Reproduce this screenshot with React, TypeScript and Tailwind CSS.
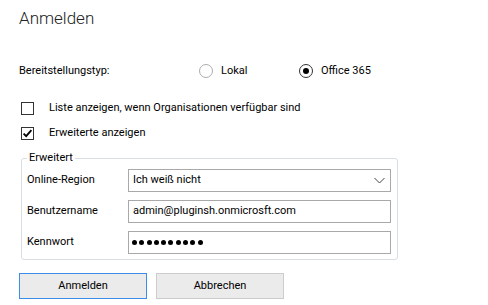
import React from "react";

const font = { fontFamily: 'Roboto, "Liberation Sans", sans-serif' };

function Radio({ checked, label }: { checked?: boolean; label: string }) {
  return (
    <div className="flex items-center">
      <div
        className={
          "w-[14px] h-[14px] rounded-full border flex items-center justify-center bg-white " +
          (checked ? "border-[#333333]" : "border-[#adadad]")
        }
      >
        {checked && <div className="w-[6px] h-[6px] rounded-full bg-black" />}
      </div>
      <span className="ml-[8px]">{label}</span>
    </div>
  );
}

function Check({ checked, label }: { checked?: boolean; label: string }) {
  return (
    <div className="flex items-center h-[20px]">
      <div className="w-[13px] h-[13px] border border-[#333333] bg-white flex items-center justify-center">
        {checked && (
          <svg width="11" height="11" viewBox="0 0 11 11">
            <path d="M1.6 5.6 L4.2 8.2 L9.4 2.2" fill="none" stroke="#000" strokeWidth="1.8" />
          </svg>
        )}
      </div>
      <span className="ml-[15px]">{label}</span>
    </div>
  );
}

function Field({ label, children }: { label: string; children: React.ReactNode }) {
  return (
    <div className="flex items-center h-[23px]">
      <div className="w-[104px] pl-[3px]">{label}</div>
      <div className="w-[263px] h-[23px] border border-[#a9a9a9] bg-white flex items-center px-[4px]">
        {children}
      </div>
    </div>
  );
}

export default function App() {
  const dots = [0, 1, 2, 3, 4, 5, 6, 7, 8, 9];
  return (
    <div
      className="w-[488px] h-[305px] bg-white overflow-hidden pl-[19px] text-[11px] text-black"
      style={font}
    >
      <div className="pt-[6px] h-[52px] text-[17px] font-light leading-[24px] text-[#222]">Anmelden</div>
      <div className="flex items-center h-[20px] mt-[9px]">
        <div className="w-[180px]">Bereitstellungstyp:</div>
        <div className="w-[100px]">
          <Radio label="Lokal" />
        </div>
        <Radio checked label="Office 365" />
      </div>
      <div className="mt-[17px] pl-[2px]">
        <Check label="Liste anzeigen, wenn Organisationen verfügbar sind" />
        <div className="mt-[5px]">
          <Check checked label="Erweiterte anzeigen" />
        </div>
      </div>
      <div className="relative ml-[2px] mt-[15px] w-[377px] h-[102px] border border-[#d9dee5] rounded-[3px] pt-[10px] px-[2px]">
        <div className="absolute left-[5px] top-[-9px] bg-white px-[2px] leading-[16px]">Erweitert</div>
        <div className="flex flex-col gap-[8px]">
          <Field label="Online-Region">
            <span className="flex-1">Ich weiß nicht</span>
            <svg width="11" height="7" viewBox="0 0 11 7" className="mr-[1px]">
              <path d="M0.5 1 L5.5 6 L10.5 1" fill="none" stroke="#444" strokeWidth="1" />
            </svg>
          </Field>
          <Field label="Benutzername">
            <span>admin@pluginsh.onmicrosft.com</span>
          </Field>
          <Field label="Kennwort">
            <div className="flex gap-[2.3px] ml-[-1px]">
              {dots.map((d) => (
                <div key={d} className="w-[5px] h-[5px] rounded-full bg-black" />
              ))}
            </div>
          </Field>
        </div>
      </div>
      <div className="flex gap-[9px] mt-[13px]">
        <div className="w-[128px] h-[26px] border border-[#3c8fe8] bg-[#ebebeb] flex items-center justify-center">
          Anmelden
        </div>
        <div className="w-[128px] h-[26px] border border-[#cccccc] bg-[#ebebeb] flex items-center justify-center">
          Abbrechen
        </div>
      </div>
    </div>
  );
}
